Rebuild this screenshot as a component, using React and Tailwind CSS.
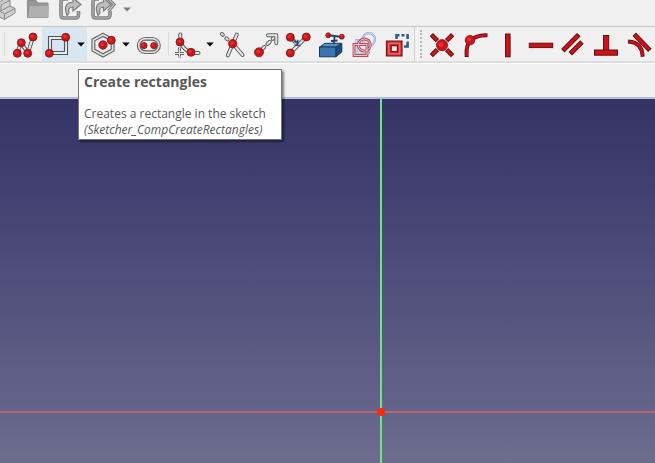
import React from "react";

const RED = "#d11118";
const EDGE = "#5c1214";

function Node({ x, y, r = 4 }) {
  return (
    <g>
      <circle cx={x} cy={y} r={r} fill="#c8141a" stroke="#7d1a1c" strokeWidth="0.8" />
      <circle cx={x - 0.8} cy={y - 0.8} r={r * 0.45} fill="#ea2a2c" />
    </g>
  );
}

// A pale wire with a dark outline, as used for sketch geometry.
function Wire({ d }) {
  return (
    <g fill="none" strokeLinecap="round" strokeLinejoin="round">
      <path d={d} stroke="#5f615f" strokeWidth="4" />
      <path d={d} stroke="#e6e7e5" strokeWidth="2" />
    </g>
  );
}

// A solid red bar with a dark outline, as used for constraints.
function Bar({ d, w = 4.6 }) {
  return (
    <g fill="none">
      <path d={d} stroke={EDGE} strokeWidth={w} strokeLinecap="square" />
      <path d={d} stroke={RED} strokeWidth={w - 1.8} strokeLinecap="square" />
    </g>
  );
}

const icons = {
  polyline: (
    <>
      <Wire d="M8 26L12 16L19 26L24 10" />
      <Node x={8.3} y={26.3} /><Node x={12.3} y={15.7} /><Node x={18.7} y={26.3} /><Node x={24} y={10} />
    </>
  ),
  rectangle: (
    <>
      <path d="M6.5 9.5H25.5V27.5H6.5Z M9.5 12.5V24.5H22.5V12.5Z" fill="#e9edf0" fillRule="evenodd" stroke="#505355" strokeWidth="1.1" />
      <Node x={7.3} y={26.3} /><Node x={23.7} y={10.3} />
    </>
  ),
  polygon: (
    <>
      <path d="M16 6.2L27 12.2V24L16 30L5 24V12.2Z" fill="#e4e5e3" stroke="#686a68" strokeWidth="1.2" />
      <path d="M16 9.4L24.2 13.8V22.4L16 26.8L7.8 22.4V13.8Z" fill="#efefef" stroke="#686a68" strokeWidth="1.2" />
      <Node x={16} y={18} r={4.2} /><Node x={24.3} y={13.3} />
    </>
  ),
  slot: (
    <>
      <rect x="5.3" y="10.5" width="23" height="16" rx="8" fill="#e4e5e3" stroke="#6d6f6d" strokeWidth="1.2" />
      <rect x="8" y="13.2" width="17.6" height="10.6" rx="5.3" fill="#efefef" stroke="#5f615f" strokeWidth="1.2" />
      <Node x={12} y={18.6} r={3.1} /><Node x={21.7} y={18.6} r={3.1} />
    </>
  ),
  fillet: (
    <>
      <Wire d="M9.3 7.5V15Q12 22 20 26H27.5" />
      <path d="M8.5 20.5V31M4 26.5H14" fill="none" stroke="#6a6c6a" strokeWidth="3" strokeDasharray="4 1" />
      <path d="M8.5 20.5V31M4 26.5H14" fill="none" stroke="#e5e5e5" strokeWidth="1" strokeDasharray="4 1" />
      <Node x={9} y={15} /><Node x={20} y={25.3} />
    </>
  ),
  trim: (
    <>
      <Wire d="M6 7L6.8 7.8M10.3 11.3L11.5 12.3" />
      <Wire d="M20.8 7.5L11.8 28.3M17 17L26.5 28" />
      <Node x={16.7} y={16.7} r={4.2} />
    </>
  ),
  extend: (
    <>
      <Wire d="M12 23.3L15.3 20M18.5 17L20.8 14.8M23.7 11.8L26.5 9.2" />
      <Wire d="M19 8.3H27.3V16.3" />
      <Node x={10} y={25.3} r={4.5} />
    </>
  ),
  split: (
    <>
      <Wire d="M8.3 26L24.3 10M8.3 10.3L12.5 14.5" />
      <path d="M11.5 13.5L17 16.5M15.8 12.8L15 18.5M12.5 18L18.5 18.5" fill="none" stroke="#315274" strokeWidth="1.7" />
      <Node x={8.3} y={10.3} /><Node x={24.3} y={10} /><Node x={8.3} y={26} />
    </>
  ),
  external: (
    <>
      <path d="M4.5 20L10 16.3H26.8L21 20Z" fill="#5a92c8" stroke="#173b5f" />
      <path d="M4.5 20H21V29.8H4.5Z" fill="#3b74b0" stroke="#173b5f" />
      <path d="M21 20L26.8 16.3V25L21 29.8Z" fill="#1e4b7c" stroke="#173b5f" />
      <path d="M12 8L27 10M19.5 9L19 17M16 14L22.5 13.5" fill="none" stroke="#24435f" strokeWidth="1.8" />
      <Node x={13.2} y={8.3} r={2.5} /><Node x={26.8} y={9.7} r={2.5} />
    </>
  ),
  carbon: (
    <g fill="none">
      <g stroke="#8ba0dc" strokeWidth="2.2">
        <circle cx="20.8" cy="12.3" r="6.2" />
        <path d="M8.5 13H21V25.5H8.5Z" />
      </g>
      <g stroke="#e4e9fa" strokeWidth="0.8">
        <circle cx="20.8" cy="12.3" r="6.2" />
        <path d="M8.5 13H21V25.5H8.5Z" />
      </g>
      <g stroke="#bb4a55" strokeWidth="2.8">
        <circle cx="16.3" cy="18" r="6" />
        <path d="M6 17.5H19V28.5H6Z" />
      </g>
      <g stroke="#f1c8ce" strokeWidth="1">
        <circle cx="16.3" cy="18" r="6" />
        <path d="M6 17.5H19V28.5H6Z" />
      </g>
    </g>
  ),
  construction: (
    <>
      <path d="M15.5 12V8.2H18.5M20.5 8.2H23.5M25.3 8.2H26.6V12M26.6 14.5V19.5H23" fill="none" stroke="#325c8b" strokeWidth="2.6" />
      <path d="M5.5 14H21V29H5.5Z" fill="#d92b30" stroke="#791519" strokeWidth="1.2" />
      <path d="M7.8 16.2H18.8V26.9H7.8Z" fill="none" stroke="#f08a8a" strokeWidth="0.9" />
      <path d="M10.2 18.6H16.4V24.6H10.2Z" fill="#f0e4e4" stroke="#791519" strokeWidth="1.2" />
    </>
  ),
  coincident: (
    <>
      <Bar d="M8 9.3L10.8 12.1M26 9.3L23.2 12.1M8 27L10.8 24.2M26 27L23.2 24.2" />
      <Node x={17} y={18.2} r={5.6} />
    </>
  ),
  pointOn: (
    <>
      <Bar d="M27.5 8.3Q18 8.5 13 13T8.6 28" w={4} />
      <Node x={12} y={13.2} r={4.8} />
    </>
  ),
  vertical: <rect x="14.5" y="7" width="4.6" height="22.8" fill={RED} stroke={EDGE} />,
  horizontal: <rect x="5.3" y="16.2" width="23.4" height="4.4" fill={RED} stroke={EDGE} />,
  parallel: <Bar d="M7.5 22L20.2 9.3M15 25L23.3 16.7" w={4.8} />,
  perpendicular: (
    <g fill={RED} stroke={EDGE}>
      <rect x="13.5" y="8.5" width="5.2" height="15" />
      <rect x="4.5" y="23" width="23" height="5.2" />
    </g>
  ),
  tangent: (
    <>
      <Bar d="M12.9 9L25.2 21.6" w={4.8} />
      <Bar d="M7 14.7Q18.5 16 19.5 27.8" w={4} />
    </>
  ),
};

function Tool({ name, label }) {
  return (
    <button type="button" aria-label={label} className="block w-[33px] shrink-0">
      <svg viewBox="0 0 33 34" className="h-[34px] w-[33px]">{icons[name]}</svg>
    </button>
  );
}

function Drop({ label, className = "text-black" }) {
  return (
    <button type="button" aria-label={label} className={`flex w-3 shrink-0 items-center justify-center ${className}`}>
      <svg viewBox="0 0 8 5" className="h-[5px] w-2"><path d="M0.3 0.5H7.7L4 4.6Z" fill="currentColor" /></svg>
    </button>
  );
}

function FileButton({ label, narrow, children }) {
  return (
    <button type="button" aria-label={label} className={narrow ? "w-[22px] shrink-0" : "w-[33px] shrink-0"}>
      <svg viewBox={narrow ? "0 0 22 26" : "0 0 33 26"} className={narrow ? "h-[26px] w-[22px]" : "h-[26px] w-[33px]"}>
        {children}
      </svg>
    </button>
  );
}

const editing = [
  ["extend", "Extend edge"],
  ["split", "Split edge"],
  ["external", "External geometry"],
  ["carbon", "Carbon copy"],
  ["construction", "Toggle construction geometry"],
];

const constraints = [
  ["coincident", "Constrain coincident"],
  ["pointOn", "Constrain point onto object"],
  ["vertical", "Constrain vertically"],
  ["horizontal", "Constrain horizontally"],
  ["parallel", "Constrain parallel"],
  ["perpendicular", "Constrain perpendicular"],
  ["tangent", "Constrain tangent"],
];

export default function App() {
  return (
    <div className="flex min-h-screen flex-col overflow-hidden bg-[#f0f0f0] font-['Open_Sans','Noto_Sans',sans-serif]">
      <div className="flex h-[27px] border-b border-[#c6c6c6]">
        <FileButton label="Create part" narrow>
          <path d="M-2 3L6 -2L10 0V6L15 8.5V13L4.5 19.5L-2 16Z" fill="#cfcfcf" stroke="#858585" />
          <path d="M-2 10L4.5 14L15 8.5M4.5 14V19.5M10 6L0 11.3M10 0L1 5V10" fill="none" stroke="#858585" />
        </FileButton>
        <FileButton label="Create group">
          <path d="M5.5 0.5H14L16 3H26V17.5H5.5Z" fill="#979797" stroke="#8b8b8b" />
          <path d="M8 6H27L26 17.5H6Z" fill="#b0b0b0" />
        </FileButton>
        <FileButton label="Make link">
          <path d="M13 -1H9Q6 -1 6 2V15Q6 18 9 18H20Q23.5 18 23.5 15V11" fill="none" stroke="#7f7f7f" strokeWidth="3.6" />
          <path d="M13 -1H9Q6 -1 6 2V15Q6 18 9 18H20Q23.5 18 23.5 15V11" fill="none" stroke="#a6a6a6" strokeWidth="1.6" />
          <path d="M12 15.5Q7 3 18 2V-2L26 4.5L18 11V7Q12.5 7 14 13Z" fill="#bdbdbd" stroke="#7d7d7d" strokeWidth="1.2" />
        </FileButton>
        <FileButton label="Link actions">
          <path d="M11 -1H8Q5 -1 5 2V15Q5 18 8 18H18.5Q22 18 22 15V11" fill="none" stroke="#7f7f7f" strokeWidth="3.6" />
          <path d="M11 -1H8Q5 -1 5 2V15Q5 18 8 18H18.5Q22 18 22 15V11" fill="none" stroke="#a6a6a6" strokeWidth="1.6" />
          <path d="M19.5 -2L26 4.5L20.5 11" fill="none" stroke="#7f7f7f" strokeWidth="3.2" />
          <path d="M19.5 -2L26 4.5L20.5 11" fill="none" stroke="#bdbdbd" strokeWidth="1.2" />
          <path d="M10 15.5Q5 3 15.5 2V-2L23 4.5L15.5 11V7Q10.5 7 12 13Z" fill="#bdbdbd" stroke="#7d7d7d" strokeWidth="1.2" />
        </FileButton>
        <div className="flex pb-2">
          <Drop label="More link actions" className="text-[#777777]" />
        </div>
      </div>

      <div className="flex h-[36px] border-b-2 border-[#dcdcdc]">
        <div className="flex w-[9px] shrink-0 items-center justify-center">
          <div className="h-6 w-px bg-[#dadada]" />
        </div>
        <Tool name="polyline" label="Create polyline" />
        <div className="relative flex shrink-0 bg-[#d8e6f2]">
          <Tool name="rectangle" label="Create rectangles" />
          <Drop label="More rectangles" />
          <div role="tooltip" className="absolute top-[42px] left-9 z-10 border border-[#767676] bg-white pt-1 pr-[15px] pb-px pl-[5px] whitespace-nowrap text-[#575757] shadow-[2px_2px_2px_rgba(0,0,0,0.45)]">
            <p className="text-[14px] leading-4 font-bold">Create rectangles</p>
            <p className="mt-4 text-[12px] leading-4">Creates a rectangle in the sketch</p>
            <p className="text-[12px] leading-4 italic">(Sketcher_CompCreateRectangles)</p>
          </div>
        </div>
        <Tool name="polygon" label="Create regular polygon" />
        <Drop label="More polygons" />
        <Tool name="slot" label="Create slot" />
        <div className="flex w-1.5 shrink-0 items-center justify-center">
          <div className="h-6 w-px bg-[#dadada]" />
        </div>
        <Tool name="fillet" label="Create fillet" />
        <Drop label="More fillets" />
        <Tool name="trim" label="Trim edge" />
        {editing.map(([name, label]) => <Tool key={name} name={name} label={label} />)}
        <div className="flex w-[11px] shrink-0 items-center justify-between border-l border-[#d2d2d2] pr-[3px] pl-0.5">
          <div className="h-full w-px bg-white" />
          <div className="h-7 border-l-2 border-dotted border-[#b9b9b9]" />
        </div>
        {constraints.map(([name, label]) => <Tool key={name} name={name} label={label} />)}
      </div>

      <div className="h-[36px] border-t border-b-2 border-t-white border-b-[#b9bdd8]" />

      <main className="relative flex-1 bg-linear-to-b from-[#333366] to-[#6d6d90]">
        <div className="absolute inset-x-0 top-[312px] h-0.5 bg-[#b4636f]" />
        <div className="absolute inset-y-0 left-[58%] w-0.5 bg-[#74e284]" />
        <div className="absolute top-[309px] left-[58%] -ml-[3px] size-2 rounded-full bg-[#fb2a08]" />
      </main>
    </div>
  );
}
